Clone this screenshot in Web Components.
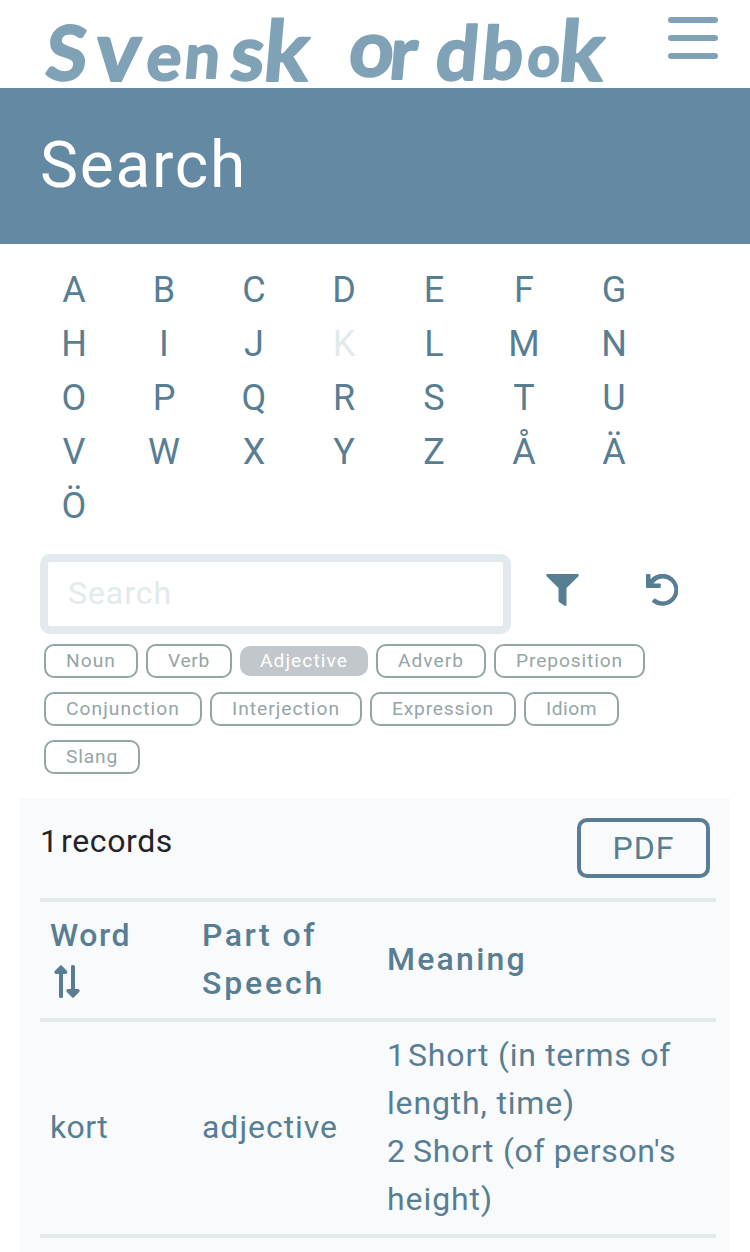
<!DOCTYPE html>
<html lang="en">
<head>
<meta charset="utf-8">
<title>Svensk Ordbok</title>
<style>
  html, body { margin: 0; height: 1252px; overflow: hidden; background: #fff; }
  body { font: 32px/48px Roboto, "Liberation Sans", sans-serif; color: #587e93;
    --ink: #587e93; --light: #80a2b7; --band: #6489a3; --line: #e2eaed; --grey: #95a5a6; }
</style>
</head>
<body>
<ordbok-app></ordbok-app>
<script>
const define = (name, html, setup) => {
  const template = document.createElement('template');
  template.innerHTML = html;
  customElements.define(name, class extends HTMLElement {
    constructor() {
      super();
      this.attachShadow({ mode: 'open' }).append(template.content.cloneNode(true));
    }
    connectedCallback() { if (setup) setup(this, this.shadowRoot); }
  });
};

/* One line of text tracked out to a given advance width. */
define('fit-text', '<style>:host { display: inline-block; white-space: pre; } span { display: inline-block; }</style><span><slot></slot></span>', (el, root) => {
  const span = root.querySelector('span');
  const target = +el.getAttribute('w');
  const length = el.textContent.length;
  span.style.letterSpacing = '0px';
  span.style.letterSpacing = (target - span.getBoundingClientRect().width) / length + 'px';
  el.style.width = target + 'px';
});

define('brand-logo', `
  <style>
    :host { display: block; width: 640px; height: 88px; }
    svg { display: block; overflow: visible; }
    text { font-family: Lato, sans-serif; font-weight: 700; fill: var(--light); stroke: var(--light); stroke-width: 2.2; stroke-linejoin: round; }
  </style>
  <svg width="640" height="88" viewBox="0 0 640 88"><text transform="translate(7 0) skewX(-5)"><tspan x="44" y="80" font-size="75">S</tspan><tspan x="94" y="81" font-size="84">v</tspan><tspan x="145" y="80" font-size="65">e</tspan><tspan x="183" y="78" font-size="62">n</tspan><tspan x="229" y="80" font-size="76">s</tspan><tspan x="262" y="81" font-size="84">k</tspan> <tspan x="347" y="76" font-size="78">o</tspan><tspan x="388" y="79" font-size="73">r</tspan><tspan x="434" y="80" font-size="75">d</tspan><tspan x="480" y="79" font-size="73">b</tspan><tspan x="526" y="76" font-size="56">o</tspan><tspan x="557" y="81" font-size="84">k</tspan></text></svg>`);

define('menu-button', `
  <style>
    :host { display: flex; flex-direction: column; gap: 12px; width: 50px; padding: 17px 32px 0 0; }
    i { height: 6px; border-radius: 3px; background: var(--light); }
  </style><i></i><i></i><i></i>`);

define('site-header', `
  <style>
    :host { display: flex; justify-content: space-between; height: 88px; }
  </style><brand-logo></brand-logo><menu-button></menu-button>`);

define('page-title', `
  <style>
    :host { display: flex; align-items: center; height: 156px; padding-left: 40px; background: var(--band); }
    h1 { margin: 0; font-size: 64px; line-height: 80px; font-weight: 400; color: #fff; }
  </style><h1><slot></slot></h1>`);

define('letter-index', `
  <style>
    :host { display: grid; grid-template-columns: repeat(7, 90px); grid-auto-rows: 54px; padding: 19px 0 0 29px; font-size: 36px; line-height: 54px; text-align: center; }
    span { overflow: hidden; }
    .current { color: var(--line); }
  </style>`, (el, root) => {
  for (const letter of 'ABCDEFGHIJKLMNOPQRSTUVWXYZÅÄÖ') {
    const cell = document.createElement('span');
    cell.textContent = letter;
    if (letter === 'K') cell.className = 'current';
    root.append(cell);
  }
});

define('search-bar', `
  <style>
    :host { display: flex; padding: 21px 0 0 40px; }
    input { box-sizing: border-box; width: 471px; height: 80px; margin: 0; padding: 0 20px 2px; border: 8px solid var(--line); border-radius: 10px; background: #fff; font: inherit; letter-spacing: .95px; outline: none; }
    input::placeholder { color: var(--line); opacity: 1; }
    svg { display: block; margin-top: 20px; fill: var(--ink); }
    .filter { margin-left: 35px; }
    .reset { margin-left: 67px; }
  </style>
  <input type="text" placeholder="Search">
  <svg class="filter" width="33" height="32" viewBox="0 0 33 32"><path d="M1.6 0H31.4C32.8 0 33.2 1.5 32.2 2.5L20.5 14V30.5C20.5 32 19.3 32.3 18.2 31.5L13.4 28.2Q12.5 27.5 12.5 26.5V14L.8 2.5C-.2 1.5.2 0 1.6 0Z"/></svg>
  <svg class="reset" width="32" height="32" viewBox="0 0 32 32"><path d="M1 0H3.5Q4.5 0 4.5 1V5.2A16 16 0 1 1 6.4 28.2Q5.6 27.5 6.3 26.7L8.2 24.8Q8.9 24.2 9.8 24.9A11.4 11.4 0 1 0 7.5 9.5H13.8Q14.8 9.5 14.8 10.5V13Q14.8 14 13.8 14H1Q0 14 0 13V1Q0 0 1 0Z"/></svg>`);

define('tag-chip', `
  <style>
    :host { display: block; box-sizing: border-box; height: 34px; padding: 0 20px; border: 2px solid var(--grey); border-radius: 10px; color: var(--grey); font-size: 19.2px; line-height: 30px; }
    :host([active]) { height: 30px; border: 0; margin-top: 2px; background: #c1c7ca; color: #fff; }
  </style><slot></slot>`);

define('tag-list', `
  <style>
    :host { display: flex; flex-direction: column; gap: 14px; padding: 10px 0 24px 44px; }
    div { display: flex; gap: 8px; height: 34px; }
  </style>
  <div>
    <tag-chip><fit-text w="50">Noun</fit-text></tag-chip>
    <tag-chip><fit-text w="42">Verb</fit-text></tag-chip>
    <tag-chip active><fit-text w="88">Adjective</fit-text></tag-chip>
    <tag-chip><fit-text w="66">Adverb</fit-text></tag-chip>
    <tag-chip><fit-text w="107">Preposition</fit-text></tag-chip>
  </div>
  <div>
    <tag-chip><fit-text w="114">Conjunction</fit-text></tag-chip>
    <tag-chip><fit-text w="108">Interjection</fit-text></tag-chip>
    <tag-chip><fit-text w="102">Expression</fit-text></tag-chip>
    <tag-chip><fit-text w="51">Idiom</fit-text></tag-chip>
  </div>
  <div><tag-chip><fit-text w="52">Slang</fit-text></tag-chip></div>`);

define('sort-icon', `
  <style>:host { display: block; height: 48px; } svg { display: block; padding: 6px 0 0 4px; fill: var(--ink); }</style>
  <svg width="26" height="33" viewBox="0 0 26 33"><path d="M6.2 .4Q7 0 7.8 .4L13 6Q13.8 7.2 13 8.2Q12.5 9 11.5 9H9V31.5Q9 33 7.5 33H6.5Q5 33 5 31.5V9H2.2Q1 9 .5 8Q0 7 .8 6ZM18.2 0H19.2Q21 0 21 1.5V24H23.8Q25 24 25.5 25Q26 26 25.2 27L19.8 32.5Q19 33 18.2 32.5L12.8 27Q12 26 12.5 25Q13 24 14.2 24H17V1.5Q17 0 18.2 0Z"/></svg>`);

define('table-row', `
  <style>
    :host { display: grid; grid-template-columns: 152px 185px 1fr; align-items: center; padding: 9px 0 11px 10px; border-bottom: 4px solid var(--line); }
    :host([head]) { border-top: 4px solid var(--line); font-weight: 500; }
  </style><slot></slot>`);

define('table-cell', `
  <style>
    :host { display: flex; flex-direction: column; align-items: flex-start; }
    ::slotted(*) { flex: none; }
  </style><slot></slot>`);

define('result-panel', `
  <style>
    :host { display: block; box-sizing: border-box; margin: 0 20px; height: 454px; padding: 0 14px 0 20px; background: #f9fafc; }
    header { display: flex; justify-content: space-between; box-sizing: border-box; height: 100px; padding: 20px 6px 0 0; }
    .count { color: #212529; line-height: 46px; }
    button { box-sizing: border-box; width: 133px; height: 60px; margin: 0; padding: 0; border: 4px solid var(--ink); border-radius: 10px; background: none; color: var(--ink); font: inherit; line-height: 50px; }
    .line { display: flex; }
  </style>
  <header>
    <span class="count"><fit-text w="21">1 </fit-text><fit-text w="112">records</fit-text></span>
    <button><fit-text w="62">PDF</fit-text></button>
  </header>
  <table-row head>
    <table-cell><fit-text w="81">Word</fit-text><sort-icon></sort-icon></table-cell>
    <table-cell><fit-text w="115">Part of</fit-text><fit-text w="123">Speech</fit-text></table-cell>
    <table-cell><fit-text w="140">Meaning</fit-text></table-cell>
  </table-row>
  <table-row>
    <table-cell><fit-text w="58">kort</fit-text></table-cell>
    <table-cell><fit-text w="136">adjective</fit-text></table-cell>
    <table-cell>
      <div class="line"><fit-text w="21">1 </fit-text><fit-text w="90">Short </fit-text><fit-text w="173">(in terms of</fit-text></div>
      <div class="line"><fit-text w="188">length, time)</fit-text></div>
      <div class="line"><fit-text w="26">2 </fit-text><fit-text w="90">Short </fit-text><fit-text w="173">(of person's</fit-text></div>
      <div class="line"><fit-text w="106">height)</fit-text></div>
    </table-cell>
  </table-row>`);

define('ordbok-app', `
  <style>:host { display: block; width: 750px; }</style>
  <site-header></site-header>
  <page-title><fit-text w="207">Search</fit-text></page-title>
  <letter-index></letter-index>
  <search-bar></search-bar>
  <tag-list></tag-list>
  <result-panel></result-panel>`);
</script>
</body>
</html>
